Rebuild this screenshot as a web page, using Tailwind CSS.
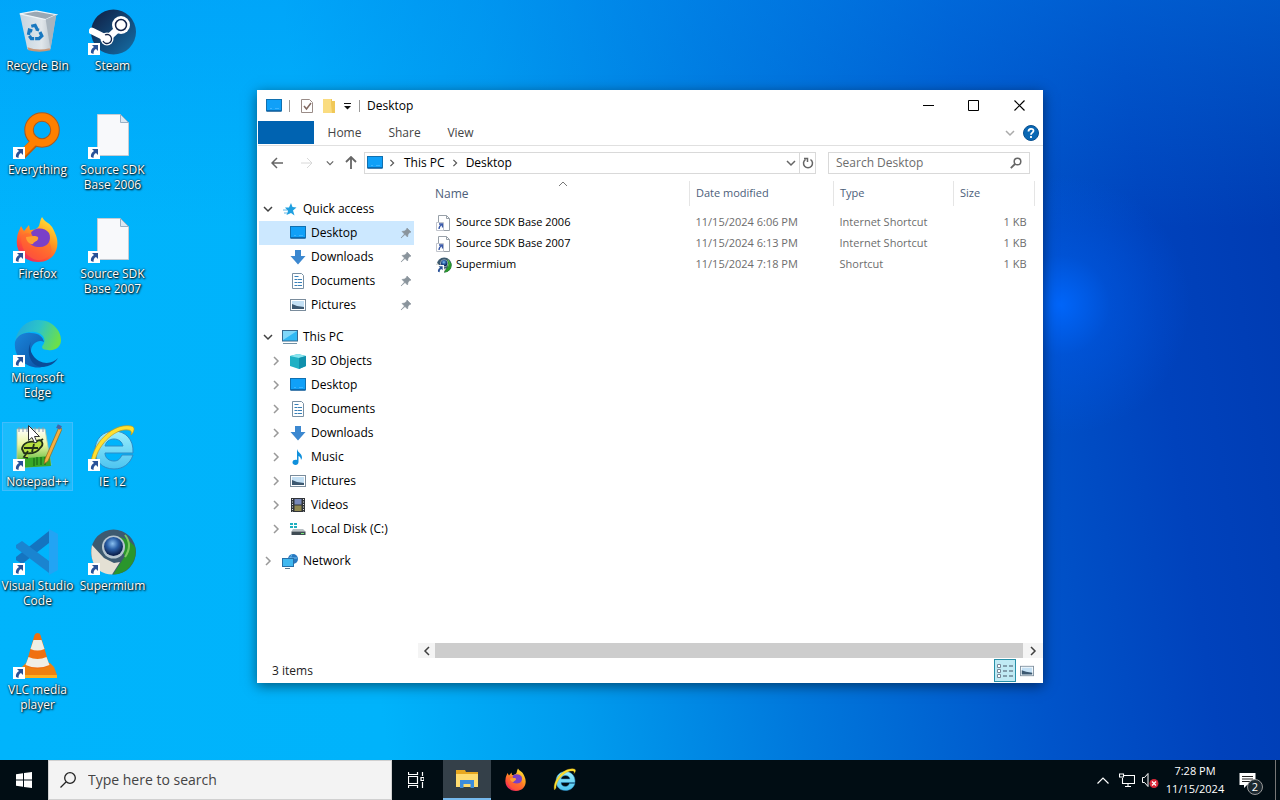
<!DOCTYPE html>
<html lang="en">
<head>
<meta charset="utf-8">
<meta name="viewport" content="width=device-width, initial-scale=1">
<title>Desktop</title>
<script src="https://cdn.jsdelivr.net/npm/@tailwindcss/browser@4"></script>
</head>
<body class="flex h-screen flex-col overflow-hidden bg-[#0078d7] font-['Open_Sans','Noto_Sans',sans-serif] text-xs text-black">

<svg class="absolute size-0" aria-hidden="true">
  <defs>
    <linearGradient id="g-ff" x1="0.8" y1="0" x2="0.2" y2="1"><stop offset="0" stop-color="#ffe83a"/><stop offset=".4" stop-color="#ff9a20"/><stop offset=".75" stop-color="#ff4a3a"/><stop offset="1" stop-color="#e8206a"/></linearGradient>
    <linearGradient id="g-edge" x1="0" y1="0.2" x2="1" y2="0.5"><stop offset="0" stop-color="#1fa8e0"/><stop offset=".5" stop-color="#2cc4c8"/><stop offset="1" stop-color="#6be04a"/></linearGradient>
    <linearGradient id="g-edge2" x1="0" y1="0" x2="1" y2="1"><stop offset="0" stop-color="#1a86dc"/><stop offset="1" stop-color="#0c4fa0"/></linearGradient>
    <linearGradient id="g-steam" x1="0" y1="0" x2="1" y2="1"><stop offset="0" stop-color="#101c40"/><stop offset="1" stop-color="#1570a8"/></linearGradient>
    <linearGradient id="g-ie" x1="0" y1="0" x2="0" y2="1"><stop offset="0" stop-color="#9aeefc"/><stop offset="1" stop-color="#4cc4f0"/></linearGradient>
    <linearGradient id="g-note" x1="0" y1="0" x2="0" y2="1"><stop offset="0" stop-color="#fff"/><stop offset=".4" stop-color="#eaf6a0"/><stop offset="1" stop-color="#38a820"/></linearGradient>
    <radialGradient id="g-ball" cx=".45" cy=".35" r=".6"><stop offset="0" stop-color="#8ac0f0"/><stop offset=".5" stop-color="#2a60a8"/><stop offset="1" stop-color="#0c2250"/></radialGradient>
    <linearGradient id="g-bin" x1="0" y1="0" x2="1" y2="0"><stop offset="0" stop-color="#c4d4e0"/><stop offset=".6" stop-color="#e0e6ea"/><stop offset="1" stop-color="#b0bcc6"/></linearGradient>
  </defs>
  <symbol id="arrow" viewBox="0 0 12 12"><rect width="12" height="12" fill="#fff"/><path d="M4 2h6v6L8 6C6 7 5.500 8.500 5.500 11L3 10C2.500 7.500 3.500 5.500 6 4z" fill="#2a5298"/></symbol>
  <symbol id="bin" viewBox="0 0 48 48"><path d="M5 5l8 37c8 2.500 17 2 24 0l6-36z" fill="url(#g-bin)"/><path d="M5 5l17-3 21 4-11 5z" fill="#9aa8b4" stroke="#eef4f8" stroke-width="1.300"/><path d="M32 11l5 31 6-36z" fill="#a8b4be"/><path d="M13 40q11 4 23 1l1 2q-12 3-23 0z" fill="#c89878"/><path d="M17 18l4-1 2 4M24 20l-1 3M14 27l1-5 3 1M15 28l2 3h3M26 24l2 4-3 3h-4" fill="none" stroke="#1878c0" stroke-width="3.400"/></symbol>
  <symbol id="steam" viewBox="0 0 48 48"><circle cx="24.500" cy="24" r="22.500" fill="url(#g-steam)"/><path d="M3 23l14 7M18 31l13-12" stroke="#fff" stroke-width="6.500" stroke-linecap="round"/><circle cx="32" cy="17" r="9" fill="#fff"/><circle cx="32" cy="17" r="5.500" fill="#fff" stroke="#13244a" stroke-width="1.500"/><circle cx="18" cy="31" r="6.500" fill="#fff"/><path d="M14 33a4.500 4.500 0 1 0 2-6" fill="none" stroke="#13244a" stroke-width="1.300"/></symbol>
  <symbol id="everything" viewBox="0 0 48 48"><path d="M22 29L8 43" stroke="#c05a08" stroke-width="9"/><circle cx="28" cy="18" r="13" fill="none" stroke="#a85a20" stroke-width="9.500"/><path d="M22 28L8 42" stroke="#ff8000" stroke-width="7"/><circle cx="28" cy="18" r="13" fill="none" stroke="#ff8000" stroke-width="7.500"/></symbol>
  <symbol id="file" viewBox="0 0 48 48"><path d="M8.500 2.500h23l8 8v33h-31z" fill="#f8f9fb" stroke="#c4ccd4"/><path d="M31.500 2.500v8h8z" fill="#dce8f2" stroke="#9ab0c4"/></symbol>
  <symbol id="firefox" viewBox="0 0 48 48"><path d="M28 1c2 3 3 4 6 6 4 3 5 5 7 10 6 12 1 29-17 29C11 46 1 36 3 23c0-5 2-8 4-13l3 5 5-6 1 5c4 0 7-1 9-4 1-3 1-6 3-9z" fill="url(#g-ff)"/><path d="M7 22c2-5 7-6 11-3 11-2 18 1 18 9 5 10-4 17-13 16C12 42 7 31 7 22z" fill="#ff6a30" opacity=".55"/><path d="M17 17c2-5 13-7 18 0 3 7-1 14-9 14-6 0-10-2-11-6 3 1 6 0 8-3-4 0-5-3-6-5z" fill="#7a40c8"/><path d="M12 21l8-1c3 0 5 1 4 3-1 3-4 2-5 5-3 1-7-3-7-7z" fill="#ffa030"/></symbol>
  <symbol id="edge" viewBox="0 0 48 48"><path d="M1 22C3 8 13 0 24 0c15 0 23 11 23 20 0 8-7 11-13 10-6 0-7-3-5-5 4-5 0-12-8-13C11 11 3 16 1 22z" fill="url(#g-edge)"/><path d="M1 22c2-6 8-10 16-9 8 0 12 4 13 9-5-3-12 1-13 8-1 9 8 16 15 16C16 52-1 39 1 22z" fill="url(#g-edge2)"/><path d="M17 22c-3 6 1 15 8 19 8 4 15 1 19-3-5 8-13 10-20 8-8-2-12-15-7-24z" fill="#0a4c98"/></symbol>
  <symbol id="notepad" viewBox="0 0 48 48"><path d="M3 5h28l6 36-34 3z" fill="url(#g-note)" stroke="#b8c8a0" stroke-width=".8"/><path d="M5 3v5M9 3v5M13 3v5M17 3v5M21 3v5M25 3v5M29 3v5" stroke="#8898b0"/><path d="M3 35l33-3 1 10-34 2z" fill="#38a828"/><path d="M8 25c1-7 8-8 14-7 5-5 9 2 4 6-3 5-9 6-16 5zM10 24h14M14 27l-4 6 4 1M20 20l-2 8M26 17l3-2" fill="#b8e040" stroke="#203018" stroke-width="1.800"/><path d="M20 42v-8m3 7v-8m4 8v-8m4 8v-8" stroke="#135c12"/><path d="M45 3L31 35l-1 5 4-3L48 5z" fill="#f4b040" stroke="#8a6820" stroke-width=".7"/><path d="M43 2l4 2" stroke="#4464a8" stroke-width="4"/></symbol>
  <symbol id="ie" viewBox="0 0 48 48"><path d="M33 31h11c-3 9-10 14-19 14C13 45 6 37 6 26S14 7 25 7s20 8 19 22H16c0 5 4 8 9 8 4 0 6-2 8-6zM16 22h18c-1-4-4-7-9-7s-8 3-9 7z" fill="url(#g-ie)" stroke="#2c8cc8"/><path d="M3 44C-2 28 20-2 42 2c5 1 3 6 0 9 1-3 0-5-3-5C25 4 6 24 6 40z" fill="#ffe030" stroke="#c89a10" stroke-width=".7"/></symbol>
  <symbol id="vscode" viewBox="0 0 48 48"><path d="M35 3v12L8 36l-6-4v-3z" fill="#1474c0"/><path d="M2 17l6-4 27 20v12L2 20z" fill="#1a84d0"/><path d="M35 1l9 5v36l-9 5z" fill="#22a4f4"/></symbol>
  <symbol id="supermium" viewBox="0 0 48 48"><circle cx="24.500" cy="24" r="22.500" fill="#3d5a70"/><path d="M24 9a23 23 0 0 1 22 10 22.500 22.500 0 0 1-22 27.500L36 28z" fill="#2a962c"/><path d="M36 7q8 10 0 22" stroke="#7ac860" stroke-width="2" fill="none"/><path d="M3 17l12 13 10 5 6-1-8 12.500C6 46 0 31 3 17z" fill="#e4e0d4"/><circle cx="24.500" cy="19" r="11.500" fill="#b4c4d0"/><circle cx="24.500" cy="18.500" r="9.500" fill="url(#g-ball)"/></symbol>
  <symbol id="vlc" viewBox="0 0 48 48"><path d="M8 35l4-4h24l4 4 3 8v3H4v-3z" fill="#ee8010"/><path d="M4 43h39v3H4z" fill="#ffb020"/><path d="M23.500 1q2.500 0 3 2l9 31q-12 6-24 0l9-31q1-2 3-2z" fill="#f07010"/><path d="M19.500 8h8l3 9q-7 3-14 0zM14.500 25q9 4 18 0l3 8q-12 5-24 0z" fill="#f0eee4"/></symbol>
  <symbol id="monitor" viewBox="0 0 16 14"><rect x=".5" y=".5" width="15" height="11.500" fill="#10a0f8" stroke="#1070b0"/><path d="M1 12h14" stroke="#084a88"/><path d="M4 9.500h2M9 9.500h4" stroke="#3cb4ff"/></symbol>
  <symbol id="pc" viewBox="0 0 16 16"><rect x=".5" y="1.500" width="15" height="10.500" fill="#30b8f4" stroke="#386a90"/><path d="M1 2h14L1 11z" fill="#80d8fa"/><path d="M1 14.500h14" stroke="#7090a4"/></symbol>
  <symbol id="star" viewBox="0 0 16 16"><path d="M9 2l1.500 4 4 .5-3.500 3 1.500 5L9 12l-4.500 2L6 10 3 6.500h4z" fill="#20a0e0"/><path d="M1 9h4M2 12h3" stroke="#60b8e8"/></symbol>
  <symbol id="down" viewBox="0 0 16 16"><path d="M5 1h6v6h4.500L8 15.500.500 7H5z" fill="#3c88d0"/></symbol>
  <symbol id="doc" viewBox="0 0 16 16"><path d="M2.500.500h9l2 2v13h-11z" fill="#fff" stroke="#7890a4"/><path d="M4.500 3.500h4M4.500 6.500h3M8 6.500h4M4.500 9.500h3M8 9.500h4M4.500 12.500h3M8 12.500h4" stroke="#3880b8"/></symbol>
  <symbol id="pic" viewBox="0 0 16 14"><rect x=".5" y="1.500" width="15" height="11" fill="#fff" stroke="#7a8c9c"/><path d="M2 3h12v8H2z" fill="#c4e0f4"/><path d="M2 6l5 2 7 1v2H2z" fill="#3c5870"/></symbol>
  <symbol id="cube" viewBox="0 0 16 16"><path d="M0 3l8-2 8 2v10l-7 3-9-3z" fill="#20b0c4"/><path d="M0 3l8-2 8 2-7 2z" fill="#88e4ee"/><path d="M9 5l7-2v10l-7 3z" fill="#1090ac"/></symbol>
  <symbol id="music" viewBox="0 0 16 16"><path d="M7 0c1 4 5 4 5 9l-1 2c0-3-2-4-2.500-4v6c0 4-6 3.500-6 .5C2.500 11 5 10.500 7 11z" fill="#1090dc"/></symbol>
  <symbol id="video" viewBox="0 0 16 16"><rect x="1" y="1" width="14" height="14" fill="#303438"/><path d="M4.500 2h7v5.500h-7z" fill="#7888b8"/><path d="M4.500 8.500h7V14h-7z" fill="#908850"/><path d="M2.500 2v13M13.500 2v13" stroke="#e4e4e4" stroke-dasharray="1 1.500"/></symbol>
  <symbol id="disk" viewBox="0 0 16 16"><path d="M0 2h3v2H0zM4 2h3v2H4zM0 5h3v2H0zM4 5h3v2H4z" fill="#20b0c0"/><path d="M3 8h10l2.500 2.500h-14z" fill="#b8c0c4"/><path d="M1.500 10.500h14V14h-14z" fill="#404c54"/><path d="M11 12.500h3" stroke="#78e878"/></symbol>
  <symbol id="net" viewBox="0 0 16 16"><circle cx="11" cy="6" r="5" fill="#2878c0"/><path d="M10 1q-3 5 1 10M7 5h8" stroke="#70c0f0" fill="none"/><rect x=".5" y="5.500" width="11" height="8" fill="#40b8f0" stroke="#2870a8"/><path d="M3 15.500h5" stroke="#587890"/></symbol>
  <symbol id="pin" viewBox="0 0 12 12"><path d="M7 1l4 4-1 .5-.5 0L8 7.500 7.500 10 5 7.500 1 11 4.500 7 2 4.500 4.500 4 6.500 2.500z" fill="#8a949c" stroke="#8a949c" stroke-width=".6"/></symbol>
  <symbol id="url" viewBox="0 0 16 16"><path d="M2.500.500h8l3 3v12h-11z" fill="#fff" stroke="#98a0a8"/><path d="M10.500 .5v3h3" fill="none" stroke="#98a0a8"/><path d="M.5 7.500h7v8h-7z" fill="#fff" stroke="#c0c4cc"/><path d="M3 9h3.500v3.500M6 9.500Q3 11 3 14" stroke="#3858a8" stroke-width="1.300" fill="none"/></symbol>
  <symbol id="folder" viewBox="0 0 24 24"><path d="M1 3h9l1 2h12v15H1z" fill="#e8a820"/><path d="M1 7h22v13H1z" fill="#ffdc70"/><path d="M5 21v-8h14v8h-3.500v-4h-7v4z" fill="#3c8cdc"/></symbol>
  <symbol id="cr" viewBox="0 0 10 10"><path d="M3 1l4 4-4 4" fill="none" stroke="currentColor" stroke-width="1.500"/></symbol>
  <symbol id="cd" viewBox="0 0 10 10"><path d="M1 3l4 4 4-4" fill="none" stroke="currentColor" stroke-width="1.500"/></symbol>
</svg>

<main class="relative min-h-0 flex-1 bg-[radial-gradient(circle_at_1060px_305px,rgba(0,104,255,0.9)_0px,rgba(0,96,245,0.35)_50px,rgba(0,90,230,0)_130px),linear-gradient(180deg,rgba(0,140,245,0.35)_0%,rgba(0,140,245,0)_30%),linear-gradient(82deg,#00b4fc_0%,#00b3fb_28%,#009cee_42%,#0078dc_58%,#0054ca_76%,#0042bc_88%,#003ab0_100%)]">

  <ul class="grid w-[150px] grid-cols-2 auto-rows-[104px] text-center leading-[15px] text-white [text-shadow:1px_1px_2px_#000,0_0_2px_#000]">
    <li class="flex flex-col items-center gap-[2px] pt-2"><svg class="size-12 p-[1px]"><use href="#bin"/></svg><span>Recycle Bin</span></li>
    <li class="relative flex flex-col items-center gap-[2px] pt-2"><svg class="size-12"><use href="#steam"/></svg><svg class="absolute top-[43px] left-[13px] size-3"><use href="#arrow"/></svg><span>Steam</span></li>
    <li class="relative flex flex-col items-center gap-[2px] pt-2"><svg class="size-12"><use href="#everything"/></svg><svg class="absolute top-[43px] left-[13px] size-3"><use href="#arrow"/></svg><span>Everything</span></li>
    <li class="relative flex flex-col items-center gap-[2px] pt-2"><svg class="size-12"><use href="#file"/></svg><svg class="absolute top-[43px] left-[13px] size-3"><use href="#arrow"/></svg><span>Source SDK<br>Base 2006</span></li>
    <li class="relative flex flex-col items-center gap-[2px] pt-2"><svg class="size-12"><use href="#firefox"/></svg><svg class="absolute top-[43px] left-[13px] size-3"><use href="#arrow"/></svg><span>Firefox</span></li>
    <li class="relative flex flex-col items-center gap-[2px] pt-2"><svg class="size-12"><use href="#file"/></svg><svg class="absolute top-[43px] left-[13px] size-3"><use href="#arrow"/></svg><span>Source SDK<br>Base 2007</span></li>
    <li class="relative col-span-2 flex w-[75px] flex-col items-center gap-[2px] pt-2"><svg class="size-12"><use href="#edge"/></svg><svg class="absolute top-[43px] left-[13px] size-3"><use href="#arrow"/></svg><span>Microsoft<br>Edge</span></li>
    <li class="relative flex flex-col items-center gap-[2px] pt-2"><span class="absolute top-[6px] left-[2px] h-[69px] w-[71px] border border-[#40bcfc] bg-white/10"></span><svg class="relative size-12"><use href="#notepad"/></svg><svg class="absolute top-[43px] left-[13px] size-3"><use href="#arrow"/></svg><span class="relative">Notepad++</span>
      <svg class="absolute top-[9px] left-7 h-[19px] w-3" viewBox="0 0 12 19"><path d="M.5.500v15l3.500-3 2.500 5.500 2.500-1L6.500 11.500H11.500z" fill="#fff" stroke="#333"/></svg></li>
    <li class="relative flex flex-col items-center gap-[2px] pt-2"><svg class="size-12"><use href="#ie"/></svg><svg class="absolute top-[43px] left-[13px] size-3"><use href="#arrow"/></svg><span>IE 12</span></li>
    <li class="relative flex flex-col items-center gap-[2px] pt-2"><svg class="size-12"><use href="#vscode"/></svg><svg class="absolute top-[43px] left-[13px] size-3"><use href="#arrow"/></svg><span class="whitespace-nowrap">Visual Studio<br>Code</span></li>
    <li class="relative flex flex-col items-center gap-[2px] pt-2"><svg class="size-12"><use href="#supermium"/></svg><svg class="absolute top-[43px] left-[13px] size-3"><use href="#arrow"/></svg><span>Supermium</span></li>
    <li class="relative flex flex-col items-center gap-[2px] pt-2"><svg class="size-12"><use href="#vlc"/></svg><svg class="absolute top-[43px] left-[13px] size-3"><use href="#arrow"/></svg><span>VLC media<br>player</span></li>
  </ul>

  <section aria-label="Desktop folder" class="absolute top-[90px] right-[237px] bottom-[77px] left-[257px] flex flex-col bg-white shadow-[0_3px_12px_rgba(0,0,0,0.5)]">
    <header class="flex h-[31px] shrink-0 items-center pl-[9px]">
      <svg class="h-[14px] w-4"><use href="#monitor"/></svg>
      <span class="ml-[7px] h-3 w-px bg-[#999]"></span>
      <button aria-label="Properties" class="ml-[10px]"><svg class="h-4 w-[14px]" viewBox="0 0 14 16"><path d="M1.500 1.500h8l3 3v10h-11z" fill="#fff" stroke="#9a8c88"/><path d="M4 8l2.500 3L11 5" fill="none" stroke="#806860" stroke-width="1.500"/></svg></button>
      <button aria-label="New folder" class="ml-2"><svg class="h-4 w-[14px]" viewBox="0 0 14 16"><path d="M1 1h8l1 2h3v12H1z" fill="#fadc80"/><path d="M9 1v5l1 9h3V3h-3V1z" fill="#f0c858"/></svg></button>
      <button aria-label="Customize toolbar" class="ml-[7px]"><svg class="h-2 w-[9px]" viewBox="0 0 9 8"><path d="M1 1.500h7" stroke="#111"/><path d="M1 4h7L4.500 7.500z" fill="#111"/></svg></button>
      <span class="ml-[7px] h-3 w-px bg-[#999]"></span>
      <h1 class="ml-[7px] flex-1">Desktop</h1>
      <button aria-label="Minimize" class="flex h-full w-[46px] items-center justify-center"><svg class="size-[11px]" viewBox="0 0 11 11"><path d="M0 5.500h11" stroke="#000"/></svg></button>
      <button aria-label="Maximize" class="flex h-full w-[45px] items-center justify-center"><svg class="size-[11px]" viewBox="0 0 11 11"><path d="M.5.500h10v10H.5z" fill="none" stroke="#000"/></svg></button>
      <button aria-label="Close" class="flex h-full w-[47px] items-center justify-center"><svg class="size-[11px]" viewBox="0 0 11 11"><path d="M.5.500l10 10m0-10l-10 10" stroke="#000" stroke-width="1.200"/></svg></button>
    </header>
    <nav aria-label="Ribbon" class="ml-px flex h-[25px] shrink-0 border-b border-[#e0e0e0] pr-1 text-[#444]">
      <button aria-label="File" class="mb-[1px] w-14 bg-[#0063b1]"></button>
      <button class="w-[61px]">Home</button><button class="w-[59px]">Share</button><button class="w-[53px]">View</button>
      <button aria-label="Expand ribbon" class="ml-auto text-[#aaa]"><svg class="size-[10px]"><use href="#cd"/></svg></button>
      <button aria-label="Help" class="ml-2 self-center"><svg class="size-4" viewBox="0 0 16 16"><circle cx="8" cy="8" r="7.500" fill="#0a68b4" stroke="#085090"/><path d="M5.500 6.500c0-3.500 5-3.500 5-.7 0 2-2.500 1.700-2.500 4M8 11v2" fill="none" stroke="#fff" stroke-width="1.800"/></svg></button>
    </nav>
    <div class="flex h-[34px] shrink-0 items-center pr-[13px] pl-[14px] text-[#666]">
      <button aria-label="Back"><svg class="size-3" viewBox="0 0 12 12"><path d="M6 1L1 6l5 5M1 6h11" fill="none" stroke="currentColor" stroke-width="1.500"/></svg></button>
      <button aria-label="Forward" class="ml-[18px] text-[#d8d8d8]"><svg class="size-3" viewBox="0 0 12 12"><path d="M6 1l5 5-5 5M11 6H0" fill="none" stroke="currentColor"/></svg></button>
      <button aria-label="Recent locations" class="ml-[13px]"><svg class="size-2"><use href="#cd"/></svg></button>
      <button aria-label="Up" class="ml-[10px]"><svg class="size-[14px]" viewBox="0 0 14 14"><path d="M2 6l5-5 5 5M7 1v12" fill="none" stroke="currentColor" stroke-width="1.800"/></svg></button>
      <div class="ml-[6px] flex h-[22px] flex-1 items-center border border-[#d9d9d9] pl-[2px] text-black">
        <svg class="h-[14px] w-4"><use href="#monitor"/></svg>
        <svg class="ml-[5px] size-2 text-[#555]"><use href="#cr"/></svg>
        <button class="ml-2">This PC</button>
        <svg class="ml-[6px] size-2 text-[#555]"><use href="#cr"/></svg>
        <button class="ml-[7px]">Desktop</button>
        <button aria-label="Previous locations" class="mr-[3px] ml-auto text-[#666]"><svg class="size-[10px]"><use href="#cd"/></svg></button>
        <button aria-label="Refresh" class="flex h-full w-4 items-center justify-center border-l border-[#d9d9d9] text-[#666]"><svg class="size-3" viewBox="0 0 12 12"><path d="M8.500 2.500a4.500 4.500 0 1 1-5 0M2 1.500h3.500V5" fill="none" stroke="currentColor" stroke-width="1.500"/></svg></button>
      </div>
      <label class="ml-3 flex h-[22px] w-[202px] items-center border border-[#d9d9d9] px-[7px]">
        <input type="search" aria-label="Search Desktop" placeholder="Search Desktop" class="min-w-0 flex-1 outline-none placeholder:text-[#6d6d6d]">
        <svg class="size-3" viewBox="0 0 12 12"><circle cx="7.500" cy="4.500" r="3.300" fill="none" stroke="currentColor" stroke-width="1.500"/><path d="M5 7L.8 11.200" stroke="currentColor" stroke-width="1.800"/></svg>
      </label>
    </div>

    <div class="flex min-h-0 flex-1">
      <nav aria-label="Folders" class="w-[161px] shrink-0 pt-[17px] pr-1 pl-[2px]">
        <ul class="[&_a]:flex [&_a]:h-6 [&_a]:items-center">
          <li><a href="#" class="pl-1"><svg class="size-[10px] text-[#404040]"><use href="#cd"/></svg><svg class="mr-[5px] ml-[9px] size-4"><use href="#star"/></svg>Quick access</a></li>
          <li><a href="#" class="bg-[#cce8ff] pr-[2px] pl-[31px]"><svg class="mr-[5px] h-[14px] w-4"><use href="#monitor"/></svg>Desktop<svg class="ml-auto size-3"><use href="#pin"/></svg></a></li>
          <li><a href="#" class="pr-[2px] pl-[31px]"><svg class="mr-[5px] size-4"><use href="#down"/></svg>Downloads<svg class="ml-auto size-3"><use href="#pin"/></svg></a></li>
          <li><a href="#" class="pr-[2px] pl-[31px]"><svg class="mr-[5px] size-4"><use href="#doc"/></svg>Documents<svg class="ml-auto size-3"><use href="#pin"/></svg></a></li>
          <li><a href="#" class="pr-[2px] pl-[31px]"><svg class="mr-[5px] h-[14px] w-4"><use href="#pic"/></svg>Pictures<svg class="ml-auto size-3"><use href="#pin"/></svg></a></li>
          <li class="pt-2"><a href="#" class="pl-1"><svg class="size-[10px] text-[#404040]"><use href="#cd"/></svg><svg class="mr-[5px] ml-[9px] size-4"><use href="#pc"/></svg>This PC</a></li>
          <li><a href="#" class="pl-3"><svg class="mr-[9px] size-[10px] text-[#999]"><use href="#cr"/></svg><svg class="mr-[5px] size-4"><use href="#cube"/></svg>3D Objects</a></li>
          <li><a href="#" class="pl-3"><svg class="mr-[9px] size-[10px] text-[#999]"><use href="#cr"/></svg><svg class="mr-[5px] h-[14px] w-4"><use href="#monitor"/></svg>Desktop</a></li>
          <li><a href="#" class="pl-3"><svg class="mr-[9px] size-[10px] text-[#999]"><use href="#cr"/></svg><svg class="mr-[5px] size-4"><use href="#doc"/></svg>Documents</a></li>
          <li><a href="#" class="pl-3"><svg class="mr-[9px] size-[10px] text-[#999]"><use href="#cr"/></svg><svg class="mr-[5px] size-4"><use href="#down"/></svg>Downloads</a></li>
          <li><a href="#" class="pl-3"><svg class="mr-[9px] size-[10px] text-[#999]"><use href="#cr"/></svg><svg class="mr-[5px] size-4"><use href="#music"/></svg>Music</a></li>
          <li><a href="#" class="pl-3"><svg class="mr-[9px] size-[10px] text-[#999]"><use href="#cr"/></svg><svg class="mr-[5px] h-[14px] w-4"><use href="#pic"/></svg>Pictures</a></li>
          <li><a href="#" class="pl-3"><svg class="mr-[9px] size-[10px] text-[#999]"><use href="#cr"/></svg><svg class="mr-[5px] size-4"><use href="#video"/></svg>Videos</a></li>
          <li><a href="#" class="pl-3"><svg class="mr-[9px] size-[10px] text-[#999]"><use href="#cr"/></svg><svg class="mr-[5px] size-4"><use href="#disk"/></svg>Local Disk (C:)</a></li>
          <li class="pt-2"><a href="#" class="pl-1"><svg class="size-[10px] text-[#999]"><use href="#cr"/></svg><svg class="mr-[5px] ml-[9px] size-4"><use href="#net"/></svg>Network</a></li>
        </ul>
      </nav>
      <div class="flex min-w-0 flex-1 flex-col pt-px">
        <div class="min-h-0 flex-1 overflow-hidden pr-2 pl-[10px]">
          <table class="w-full table-fixed border-collapse text-left text-[#6d6d6d]">
            <colgroup><col><col class="w-[144px]"><col class="w-[120px]"><col class="w-[81px]"></colgroup>
            <thead class="text-[#4c607a]">
              <tr class="h-[25px] [&>th]:border-r [&>th]:border-[#e5e5e5] [&>th]:font-normal">
                <th scope="col" class="relative pl-[7px]">Name<svg class="absolute top-0 left-1/2 size-2" viewBox="0 0 8 8"><path d="M0 5l4-4 4 4" fill="none" stroke="#777"/></svg></th>
                <th scope="col" class="pl-[6px] text-[11px]">Date modified</th><th scope="col" class="pl-[6px] text-[11px]">Type</th><th scope="col" class="pl-[6px] text-[11px]">Size</th>
              </tr>
            </thead>
            <tbody class="text-[11px] before:block before:h-[6px] [&>tr]:h-[21px]">
              <tr><td class="text-black"><span class="flex items-center gap-1 pl-2"><svg class="size-4"><use href="#url"/></svg>Source SDK Base 2006</span></td><td class="pl-[6px]">11/15/2024 6:06 PM</td><td class="pl-[6px]">Internet Shortcut</td><td class="pr-2 text-right">1 KB</td></tr>
              <tr><td class="text-black"><span class="flex items-center gap-1 pl-2"><svg class="size-4"><use href="#url"/></svg>Source SDK Base 2007</span></td><td class="pl-[6px]">11/15/2024 6:13 PM</td><td class="pl-[6px]">Internet Shortcut</td><td class="pr-2 text-right">1 KB</td></tr>
              <tr><td class="text-black"><span class="flex items-center gap-1 pl-2"><span class="relative"><svg class="size-4"><use href="#supermium"/></svg><svg class="absolute bottom-0 left-0 size-2"><use href="#arrow"/></svg></span>Supermium</span></td><td class="pl-[6px]">11/15/2024 7:18 PM</td><td class="pl-[6px]">Shortcut</td><td class="pr-2 text-right">1 KB</td></tr>
            </tbody>
          </table>
        </div>
        <div class="flex h-[15px] shrink-0 items-center bg-[#f4f4f4] text-[#404040]">
          <button aria-label="Scroll left" class="flex w-[17px] justify-center"><svg class="size-[10px] rotate-180"><use href="#cr"/></svg></button>
          <span class="h-full flex-1 bg-[#cdcdcd]"></span>
          <button aria-label="Scroll right" class="flex w-5 justify-center"><svg class="size-[10px]"><use href="#cr"/></svg></button>
        </div>
      </div>
    </div>
    <footer class="flex h-[25px] shrink-0 items-center pr-[9px] pl-[15px] text-[#222]">
      <span class="flex-1">3 items</span>
      <button aria-label="Details view" class="flex h-[23px] w-[22px] items-center justify-center border border-[#2890a8] bg-[#c0eaf4]"><svg class="h-[14px] w-4" viewBox="0 0 16 14"><path d="M.5.500h3v3h-3zM.5 5.500h3v3h-3zM.5 10.500h3v3h-3z" fill="#fff" stroke="#789"/><path d="M6 2h4M12 2h4M6 7h4M12 7h4M6 12h4M12 12h4" stroke="#456"/></svg></button>
      <button aria-label="Large icons view" class="ml-1"><svg class="h-3 w-[14px]" viewBox="0 0 16 14" preserveAspectRatio="none"><use href="#pic"/></svg></button>
    </footer>
  </section>
</main>

<footer class="flex h-10 shrink-0 items-center bg-[#010d14] text-white">
  <button aria-label="Start" class="flex h-full w-12 items-center justify-center"><svg class="size-4" viewBox="0 0 16 16"><path d="M0 2.200L7 1.200v6.300H0zM8 1l8-1v7.500H8zM0 8.500h7v6.300L0 13.800zM8 8.500h8V16l-8-1z" fill="#fff"/></svg></button>
  <label class="flex h-full w-[344px] items-center gap-3 border border-[#d0d0d0] bg-[#f3f3f3] pl-[11px] text-[#222]">
    <svg class="size-4" viewBox="0 0 16 16"><circle cx="10" cy="6" r="5.300" fill="none" stroke="currentColor" stroke-width="1.300"/><path d="M6 10L.5 15.500" stroke="currentColor" stroke-width="1.300"/></svg>
    <input type="search" aria-label="Search Windows" placeholder="Type here to search" class="min-w-0 flex-1 text-sm outline-none placeholder:text-[#444]">
  </label>
  <button aria-label="Task view" class="flex h-full w-12 items-center justify-center"><svg class="size-4" viewBox="0 0 16 16"><path d="M.5 0v2.500h9V0M.5 16v-2.500h9V16M.5 4.500h9v7h-9zM14.500 0v4M14.500 10v6M13 5.500h3v3h-3z" fill="none" stroke="#fff" stroke-width="1.200"/></svg></button>
  <button aria-label="File Explorer" class="ml-[3px] flex h-full w-12 items-center justify-center border-b-2 border-[#76b9ed] bg-[#344049]"><svg class="size-6"><use href="#folder"/></svg></button>
  <button aria-label="Firefox" class="flex h-full w-[49px] items-center justify-center"><svg class="size-6"><use href="#firefox"/></svg></button>
  <button aria-label="Internet Explorer" class="flex h-full w-[49px] items-center justify-center"><svg class="size-6"><use href="#ie"/></svg></button>
  <div class="ml-auto flex h-full items-center">
    <button aria-label="Show hidden icons"><svg class="h-[7px] w-3" viewBox="0 0 12 7"><path d="M.5 6.500L6 1l5.500 5.500" fill="none" stroke="#fff" stroke-width="1.200"/></svg></button>
    <button aria-label="Network" class="ml-[10px]"><svg class="h-[15px] w-4" viewBox="0 0 16 15"><path d="M5 2.500h10.500v8H3.500V5M9 10.500v3M6 13.500h6M.5 1h4v3h-4z" fill="none" stroke="#fff" stroke-width="1.100"/></svg></button>
    <button aria-label="Volume muted" class="ml-[7px]"><svg class="h-4 w-[17px]" viewBox="0 0 17 16"><path d="M.5 5.500h2l3.500-4v13l-3.500-4h-2z" fill="none" stroke="#fff"/><circle cx="12" cy="11.500" r="4.500" fill="#d82838"/><path d="M10 9.500l4 4m0-4l-4 4" stroke="#fff" stroke-width="1.300"/></svg></button>
    <time class="ml-[5px] w-[62px] text-center text-[11px] leading-[18px]">7:28 PM<br>11/15/2024</time>
    <button aria-label="Notifications, 2 new" class="relative ml-[13px] flex h-full w-[37px] items-center border-r border-[#777]">
      <svg class="h-[17px] w-[17px]" viewBox="0 0 17 17"><path d="M.5 1h16v12H8l-3 3v-3H.5z" fill="#fff"/><path d="M3 4.500h11M3 7h11M3 9.500h8" stroke="#222"/></svg>
      <span class="absolute top-[19px] left-2 flex size-4 items-center justify-center rounded-full border border-[#999] bg-[#1c2830] text-[11px]">2</span>
    </button>
    <span class="w-1"></span>
  </div>
</footer>
</body>
</html>
